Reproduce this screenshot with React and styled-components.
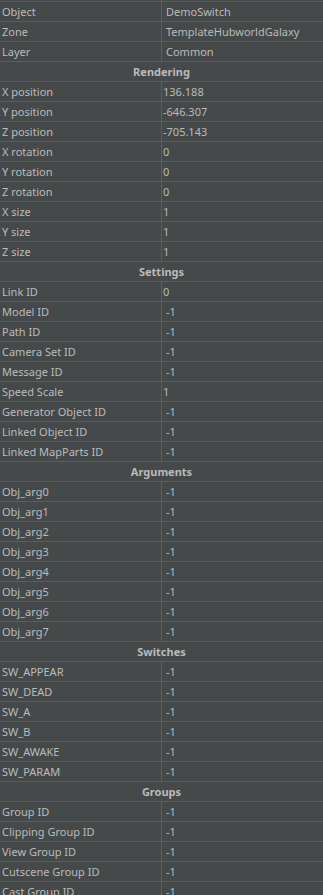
import React from "react";
import styled, { createGlobalStyle } from "styled-components";

const Global = createGlobalStyle`
  html, body { margin: 0; padding: 0; background: #45494a; overflow: hidden; }
  body { font-family: "Noto Sans", "Open Sans", sans-serif; }
`;

const Grid = styled.div`
  width: 323px;
  margin-top: -18px;
  background: #45494a;
  color: #bbbbbb;
  font-size: 11px;
`;

const Row = styled.div`
  display: grid;
  grid-template-columns: 162px 1fr;
  height: 19px;
  border-bottom: 1px solid #5b5e60;
`;

const Label = styled.div`
  padding: 1px 0 0 2px;
  line-height: 18px;
  border-right: 1px solid #5b5e60;
  white-space: nowrap;
  overflow: hidden;
`;

const Value = styled.div`
  padding: 1px 0 0 ${(p) => (p.$boxed ? "4px" : "1px")};
  line-height: 18px;
  white-space: nowrap;
  overflow: hidden;
`;

const Section = styled.div`
  box-sizing: border-box;
  height: 20px;
  padding-top: 1px;
  line-height: 18px;
  border-bottom: 1px solid #5b5e60;
  text-align: center;
  font-weight: 700;
`;

const data = [
  { label: "", value: "", boxed: true },
  { label: "Object", value: "DemoSwitch", boxed: true },
  { label: "Zone", value: "TemplateHubworldGalaxy", boxed: true },
  { label: "Layer", value: "Common", boxed: true },
  { section: "Rendering" },
  { label: "X position", value: "136.188" },
  { label: "Y position", value: "-646.307" },
  { label: "Z position", value: "-705.143" },
  { label: "X rotation", value: "0" },
  { label: "Y rotation", value: "0" },
  { label: "Z rotation", value: "0" },
  { label: "X size", value: "1" },
  { label: "Y size", value: "1" },
  { label: "Z size", value: "1" },
  { section: "Settings" },
  { label: "Link ID", value: "0" },
  { label: "Model ID", value: "-1", boxed: true },
  { label: "Path ID", value: "-1", boxed: true },
  { label: "Camera Set ID", value: "-1", boxed: true },
  { label: "Message ID", value: "-1", boxed: true },
  { label: "Speed Scale", value: "1" },
  { label: "Generator Object ID", value: "-1", boxed: true },
  { label: "Linked Object ID", value: "-1", boxed: true },
  { label: "Linked MapParts ID", value: "-1", boxed: true },
  { section: "Arguments" },
  ...Array.from({ length: 8 }, (_, i) => ({ label: `Obj_arg${i}`, value: "-1", boxed: true })),
  { section: "Switches" },
  ...["SW_APPEAR", "SW_DEAD", "SW_A", "SW_B", "SW_AWAKE", "SW_PARAM"].map((l) => ({
    label: l,
    value: "-1",
    boxed: true,
  })),
  { section: "Groups" },
  ...["Group ID", "Clipping Group ID", "View Group ID", "Cutscene Group ID", "Cast Group ID"].map(
    (l) => ({ label: l, value: "-1", boxed: true })
  ),
];

export default function App() {
  return (
    <>
      <Global />
      <Grid>
        {data.map((d, i) =>
          d.section ? (
            <Section key={i}>{d.section}</Section>
          ) : (
            <Row key={i}>
              <Label>{d.label}</Label>
              <Value $boxed={d.boxed}>{d.value}</Value>
            </Row>
          )
        )}
      </Grid>
    </>
  );
}
